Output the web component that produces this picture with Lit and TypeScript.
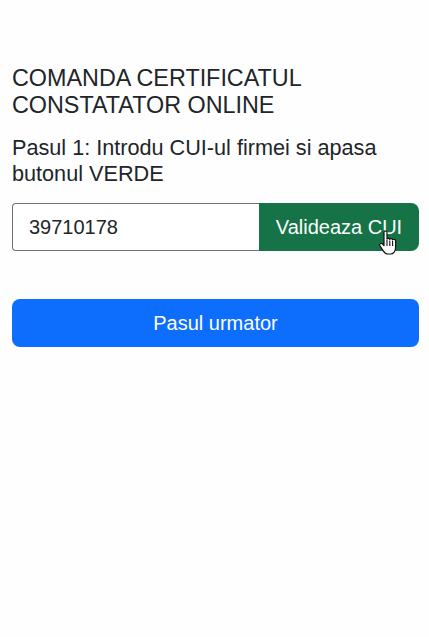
import { LitElement, html, css } from "lit";
import { customElement } from "lit/decorators.js";

@customElement("app-root")
export class AppRoot extends LitElement {
  static styles = css`
    :host {
      display: block;
      min-height: 637px;
      background: #fefefe;
      color: #212529;
      font-family: "Liberation Sans", Arial, sans-serif;
    }
    .page {
      display: flex;
      flex-direction: column;
      padding: 65px 10px 0 12px;
    }
    h1 {
      margin: 0 0 16px;
      font-size: 23.35px;
      font-weight: 400;
      line-height: 27px;
    }
    p {
      margin: 0 0 16px;
      font-size: 21.65px;
      line-height: 26px;
    }
    .group {
      display: flex;
      height: 48px;
      margin-bottom: 48px;
      position: relative;
    }
    .input {
      flex: 1;
      box-sizing: border-box;
      display: flex;
      align-items: center;
      padding: 0 16px;
      border: 1px solid #6c757d;
      border-right: 0;
      border-radius: 4px 0 0 4px;
      background: #fff;
      font-size: 20px;
    }
    .btn {
      display: flex;
      align-items: center;
      justify-content: center;
      box-sizing: border-box;
      height: 48px;
      color: #fff;
      font-size: 20px;
    }
    .validate {
      width: 160px;
      background: #157347;
      border-radius: 0 8px 8px 0;
    }
    .next {
      background: #0d6efd;
      border-radius: 8px;
    }
    .cursor {
      position: absolute;
      left: 367px;
      top: 26px;
      width: 20px;
      height: 28px;
    }
  `;

  render() {
    return html`
      <div class="page">
        <h1>COMANDA CERTIFICATUL CONSTATATOR ONLINE</h1>
        <p>Pasul 1: Introdu CUI-ul firmei si apasa butonul VERDE</p>
        <div class="group">
          <div class="input">39710178</div>
          <div class="btn validate">Valideaza CUI</div>
          <svg class="cursor" viewBox="0 0 20 28" aria-hidden="true">
            <path
              d="M5 3.2C5 1.4 8 1.4 8 3.2V10.2C8.2 9 10.6 9 10.8 10.4 11 9.3 13.4 9.3 13.6 10.8 13.9 10 16.6 10 16.6 12V18.5C16.6 22 14.6 25 11.5 25H9C6.5 25 5.2 23.6 4 21.6L1 16.8C-.1 15 2.2 13.4 3.6 15L5 16.5Z"
              fill="#fff"
              stroke="#111"
              stroke-width="1.2"
              stroke-linejoin="round"
            />
            <path d="M8 11v6M10.8 11.5v5.5M13.6 12v5" stroke="#111" stroke-width="1.1" fill="none" />
          </svg>
        </div>
        <div class="btn next">Pasul urmator</div>
      </div>
    `;
  }
}
